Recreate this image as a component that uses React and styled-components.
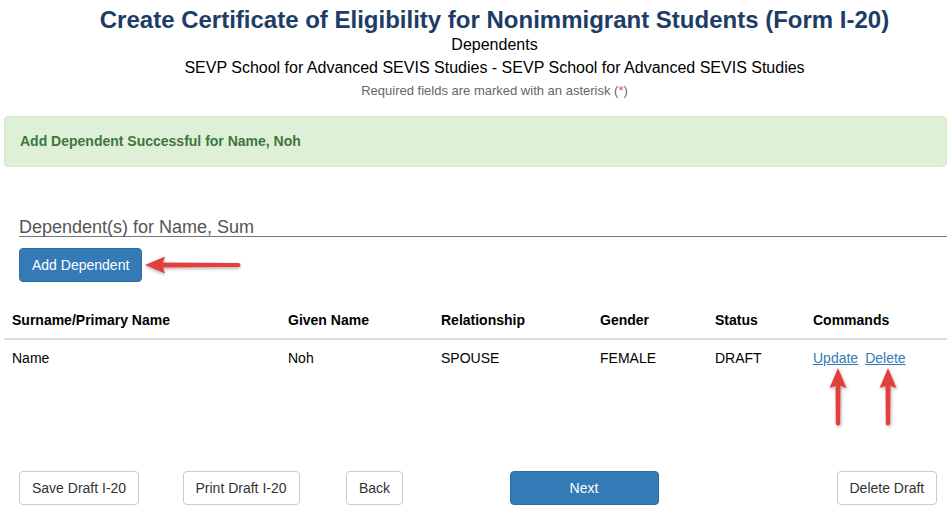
import React from "react";
import styled, { createGlobalStyle } from "styled-components";

const Global = createGlobalStyle`
  html, body { margin: 0; padding: 0; background: #fff; overflow: hidden; }
  body { font-family: "Liberation Sans", Arial, sans-serif; color: #333; font-size: 14px; }
  * { box-sizing: border-box; }
`;

const Page = styled.div`
  position: relative;
  width: 947px;
  height: 515px;
  overflow: hidden;
`;

const Header = styled.header`
  padding: 7px 0 0 42px;
  text-align: center;
`;

const Title = styled.h1`
  margin: 0;
  font-size: 24px;
  line-height: 26px;
  font-weight: bold;
  color: #1d3c66;
  white-space: nowrap;
`;

const SubLine = styled.div`
  font-size: 16px;
  line-height: 23px;
  color: #000;
  white-space: nowrap;
`;

const Required = styled.div`
  font-size: 13px;
  line-height: 24px;
  color: #666;
  span { color: #d9534f; }
`;

const Alert = styled.div`
  margin: 13px 0 0 4px;
  width: 943px;
  padding: 15px;
  line-height: 19px;
  font-size: 14px;
  font-weight: bold;
  color: #3c763d;
  background: #dff0d8;
  border: 1px solid #d6e9c6;
  border-radius: 4px;
`;

const Section = styled.section`
  padding-left: 19px;
  margin-top: 47px;
`;

const Legend = styled.div`
  font-size: 18px;
  line-height: 18px;
  padding-top: 4px;
  color: #555;
  border-bottom: 1px solid #777;
`;

const PrimaryButton = styled.button`
  font-family: inherit;
  font-size: 14px;
  line-height: 20px;
  height: 34px;
  padding: 6px 12px;
  width: ${(p) => (p.$width ? `${p.$width}px` : "auto")};
  color: #fff;
  background: #337ab7;
  border: 1px solid #2e6da4;
  border-radius: 4px;
  cursor: pointer;
`;

const AddButton = styled(PrimaryButton)`
  margin-top: 11px;
`;

const Table = styled.table`
  margin: 20px 0 0 4px;
  border-collapse: collapse;
  table-layout: fixed;
  width: 943px;
`;

const Th = styled.th`
  text-align: left;
  font-weight: bold;
  color: #000;
  padding: 8px;
  line-height: 20px;
  border-bottom: 2px solid #ddd;
  width: ${(p) => p.$w}px;
`;

const Td = styled.td`
  padding: 8px;
  line-height: 20px;
  color: #000;
  border-bottom: 1px solid transparent;
`;

const Link = styled.a`
  color: #337ab7;
  text-decoration: underline;
  margin-right: 7px;
  cursor: pointer;
`;

const Actions = styled.div`
  margin-top: 94px;
  padding-left: 19px;
  display: grid;
  grid-template-columns: repeat(6, 163.5px);
`;

const Cell = styled.div`
  grid-column: ${(p) => p.$col || "auto"};
`;

const DefaultButton = styled.button`
  font-family: inherit;
  font-size: 14px;
  line-height: 20px;
  height: 34px;
  padding: 6px 12px;
  color: #333;
  background: #fff;
  border: 1px solid #ccc;
  border-radius: 4px;
  cursor: pointer;
  white-space: nowrap;
`;

const ArrowSvg = styled.svg`
  position: absolute;
  left: ${(p) => p.$x}px;
  top: ${(p) => p.$y}px;
  overflow: visible;
  pointer-events: none;
`;

const LeftArrow = ({ x, y }) => (
  <ArrowSvg $x={x} $y={y} width="102" height="24" viewBox="0 0 102 24">
    <defs>
      <filter id="sh1" x="-20%" y="-50%" width="140%" height="200%">
        <feDropShadow dx="0" dy="1.5" stdDeviation="1.5" floodColor="#000" floodOpacity="0.3" />
      </filter>
    </defs>
    <g filter="url(#sh1)" fill="#e2403e">
      <path d="M2 12 L22 3.5 L20 9.5 L96 10 Q99 12 96 14 L20 14.5 L22 20.5 Z" />
    </g>
  </ArrowSvg>
);

const UpArrow = ({ x, y, id }) => (
  <ArrowSvg $x={x} $y={y} width="24" height="64" viewBox="0 0 24 64">
    <defs>
      <filter id={id} x="-50%" y="-20%" width="200%" height="140%">
        <feDropShadow dx="1" dy="1.5" stdDeviation="1.5" floodColor="#000" floodOpacity="0.3" />
      </filter>
    </defs>
    <g filter={`url(#${id})`} fill="#e2403e">
      <path d="M12 2 L20.5 22 L14.5 20 L14.2 58 Q12 61 9.8 58 L9.5 20 L3.5 22 Z" />
    </g>
  </ArrowSvg>
);

const columns = [
  ["Surname/Primary Name", 276],
  ["Given Name", 153],
  ["Relationship", 159],
  ["Gender", 115],
  ["Status", 98],
  ["Commands", 142],
];

export default function App() {
  return (
    <Page>
      <Global />
      <Header>
        <Title>Create Certificate of Eligibility for Nonimmigrant Students (Form I-20)</Title>
        <SubLine>Dependents</SubLine>
        <SubLine>SEVP School for Advanced SEVIS Studies - SEVP School for Advanced SEVIS Studies</SubLine>
        <Required>
          Required fields are marked with an asterisk (<span>*</span>)
        </Required>
      </Header>
      <Alert>Add Dependent Successful for Name, Noh</Alert>
      <Section>
        <Legend>Dependent(s) for Name, Sum</Legend>
        <AddButton>Add Dependent</AddButton>
      </Section>
      <Table>
        <thead>
          <tr>
            {columns.map(([label, w]) => (
              <Th key={label} $w={w}>
                {label}
              </Th>
            ))}
          </tr>
        </thead>
        <tbody>
          <tr>
            <Td>Name</Td>
            <Td>Noh</Td>
            <Td>SPOUSE</Td>
            <Td>FEMALE</Td>
            <Td>DRAFT</Td>
            <Td>
              <Link>Update</Link>
              <Link>Delete</Link>
            </Td>
          </tr>
        </tbody>
      </Table>
      <Actions>
        <Cell $col="1">
          <DefaultButton>Save Draft I-20</DefaultButton>
        </Cell>
        <Cell $col="2">
          <DefaultButton>Print Draft I-20</DefaultButton>
        </Cell>
        <Cell $col="3">
          <DefaultButton>Back</DefaultButton>
        </Cell>
        <Cell $col="4 / span 2">
          <PrimaryButton $width={149}>Next</PrimaryButton>
        </Cell>
        <Cell $col="6">
          <DefaultButton>Delete Draft</DefaultButton>
        </Cell>
      </Actions>
      <LeftArrow x={143} y={253} />
      <UpArrow x={826} y={366} id="sh2" />
      <UpArrow x={876} y={366} id="sh3" />
    </Page>
  );
}
